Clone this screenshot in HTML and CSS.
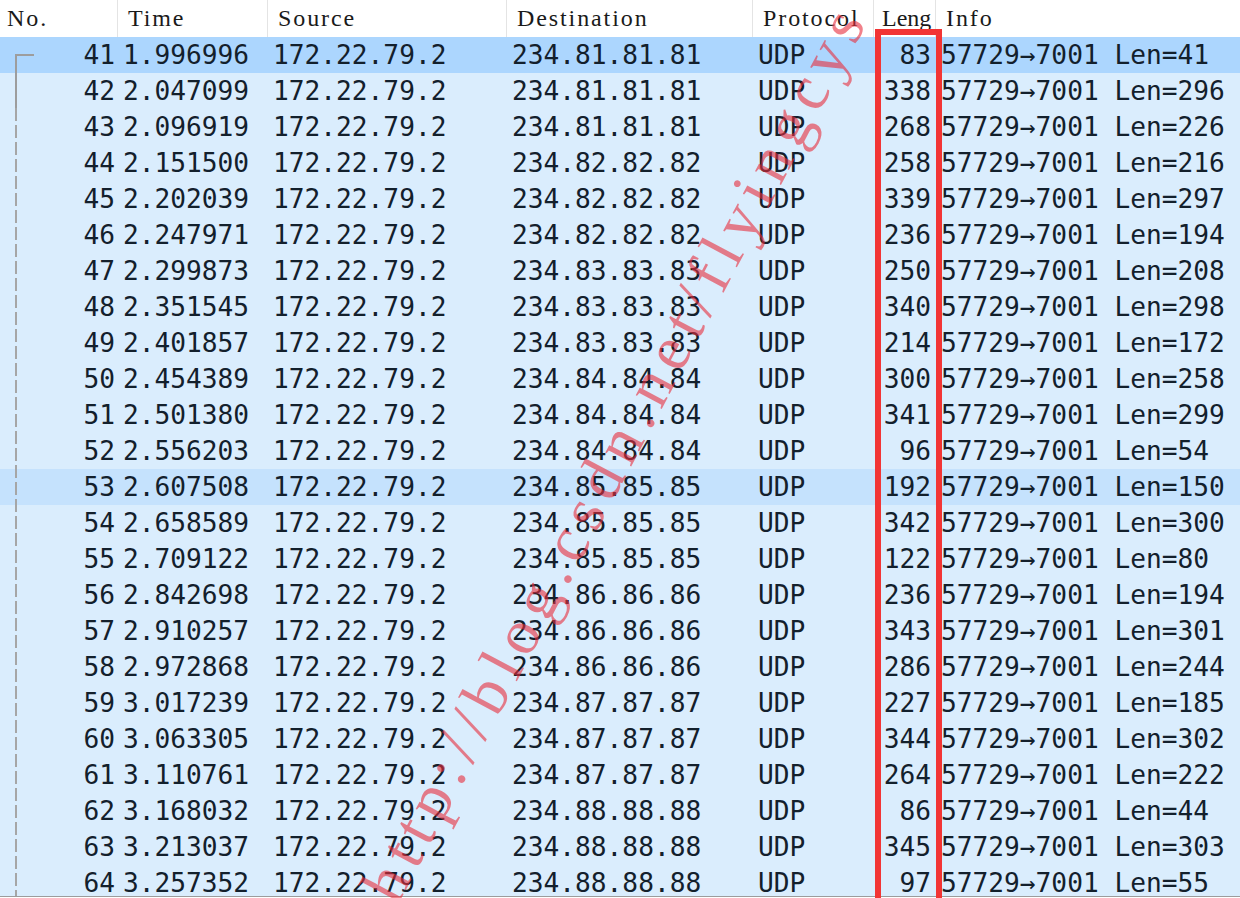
FILE: index.html
```html
<!DOCTYPE html>
<html>
<head>
  <meta charset="UTF-8" />
  <title>Packet List</title>
  <link rel="stylesheet" href="styles.css">
</head>
<body>

<div class="packet-list">
  <!-- Column headers -->
  <div class="row header">
    <div class="cell first">No.</div>
    <div class="cell">Time</div>
    <div class="cell">Source</div>
    <div class="cell">Destination</div>
    <div class="cell">Protocol</div>
    <div class="cell narrow">Leng</div>
    <div class="cell last">Info</div>
  </div>

  <div class="rows">
    <div class="row packet selected"><div class="cell num">41</div><div class="cell">1.996996</div><div class="cell">172.22.79.2</div><div class="cell">234.81.81.81</div><div class="cell">UDP</div><div class="cell num len">83</div><div class="cell">57729→7001 Len=41</div></div>
    <div class="row packet"><div class="cell num">42</div><div class="cell">2.047099</div><div class="cell">172.22.79.2</div><div class="cell">234.81.81.81</div><div class="cell">UDP</div><div class="cell num len">338</div><div class="cell">57729→7001 Len=296</div></div>
    <div class="row packet"><div class="cell num">43</div><div class="cell">2.096919</div><div class="cell">172.22.79.2</div><div class="cell">234.81.81.81</div><div class="cell">UDP</div><div class="cell num len">268</div><div class="cell">57729→7001 Len=226</div></div>
    <div class="row packet"><div class="cell num">44</div><div class="cell">2.151500</div><div class="cell">172.22.79.2</div><div class="cell">234.82.82.82</div><div class="cell">UDP</div><div class="cell num len">258</div><div class="cell">57729→7001 Len=216</div></div>
    <div class="row packet"><div class="cell num">45</div><div class="cell">2.202039</div><div class="cell">172.22.79.2</div><div class="cell">234.82.82.82</div><div class="cell">UDP</div><div class="cell num len">339</div><div class="cell">57729→7001 Len=297</div></div>
    <div class="row packet"><div class="cell num">46</div><div class="cell">2.247971</div><div class="cell">172.22.79.2</div><div class="cell">234.82.82.82</div><div class="cell">UDP</div><div class="cell num len">236</div><div class="cell">57729→7001 Len=194</div></div>
    <div class="row packet"><div class="cell num">47</div><div class="cell">2.299873</div><div class="cell">172.22.79.2</div><div class="cell">234.83.83.83</div><div class="cell">UDP</div><div class="cell num len">250</div><div class="cell">57729→7001 Len=208</div></div>
    <div class="row packet"><div class="cell num">48</div><div class="cell">2.351545</div><div class="cell">172.22.79.2</div><div class="cell">234.83.83.83</div><div class="cell">UDP</div><div class="cell num len">340</div><div class="cell">57729→7001 Len=298</div></div>
    <div class="row packet"><div class="cell num">49</div><div class="cell">2.401857</div><div class="cell">172.22.79.2</div><div class="cell">234.83.83.83</div><div class="cell">UDP</div><div class="cell num len">214</div><div class="cell">57729→7001 Len=172</div></div>
    <div class="row packet"><div class="cell num">50</div><div class="cell">2.454389</div><div class="cell">172.22.79.2</div><div class="cell">234.84.84.84</div><div class="cell">UDP</div><div class="cell num len">300</div><div class="cell">57729→7001 Len=258</div></div>
    <div class="row packet"><div class="cell num">51</div><div class="cell">2.501380</div><div class="cell">172.22.79.2</div><div class="cell">234.84.84.84</div><div class="cell">UDP</div><div class="cell num len">341</div><div class="cell">57729→7001 Len=299</div></div>
    <div class="row packet"><div class="cell num">52</div><div class="cell">2.556203</div><div class="cell">172.22.79.2</div><div class="cell">234.84.84.84</div><div class="cell">UDP</div><div class="cell num len">96</div><div class="cell">57729→7001 Len=54</div></div>
    <div class="row packet hover"><div class="cell num">53</div><div class="cell">2.607508</div><div class="cell">172.22.79.2</div><div class="cell">234.85.85.85</div><div class="cell">UDP</div><div class="cell num len">192</div><div class="cell">57729→7001 Len=150</div></div>
    <div class="row packet"><div class="cell num">54</div><div class="cell">2.658589</div><div class="cell">172.22.79.2</div><div class="cell">234.85.85.85</div><div class="cell">UDP</div><div class="cell num len">342</div><div class="cell">57729→7001 Len=300</div></div>
    <div class="row packet"><div class="cell num">55</div><div class="cell">2.709122</div><div class="cell">172.22.79.2</div><div class="cell">234.85.85.85</div><div class="cell">UDP</div><div class="cell num len">122</div><div class="cell">57729→7001 Len=80</div></div>
    <div class="row packet"><div class="cell num">56</div><div class="cell">2.842698</div><div class="cell">172.22.79.2</div><div class="cell">234.86.86.86</div><div class="cell">UDP</div><div class="cell num len">236</div><div class="cell">57729→7001 Len=194</div></div>
    <div class="row packet"><div class="cell num">57</div><div class="cell">2.910257</div><div class="cell">172.22.79.2</div><div class="cell">234.86.86.86</div><div class="cell">UDP</div><div class="cell num len">343</div><div class="cell">57729→7001 Len=301</div></div>
    <div class="row packet"><div class="cell num">58</div><div class="cell">2.972868</div><div class="cell">172.22.79.2</div><div class="cell">234.86.86.86</div><div class="cell">UDP</div><div class="cell num len">286</div><div class="cell">57729→7001 Len=244</div></div>
    <div class="row packet"><div class="cell num">59</div><div class="cell">3.017239</div><div class="cell">172.22.79.2</div><div class="cell">234.87.87.87</div><div class="cell">UDP</div><div class="cell num len">227</div><div class="cell">57729→7001 Len=185</div></div>
    <div class="row packet"><div class="cell num">60</div><div class="cell">3.063305</div><div class="cell">172.22.79.2</div><div class="cell">234.87.87.87</div><div class="cell">UDP</div><div class="cell num len">344</div><div class="cell">57729→7001 Len=302</div></div>
    <div class="row packet"><div class="cell num">61</div><div class="cell">3.110761</div><div class="cell">172.22.79.2</div><div class="cell">234.87.87.87</div><div class="cell">UDP</div><div class="cell num len">264</div><div class="cell">57729→7001 Len=222</div></div>
    <div class="row packet"><div class="cell num">62</div><div class="cell">3.168032</div><div class="cell">172.22.79.2</div><div class="cell">234.88.88.88</div><div class="cell">UDP</div><div class="cell num len">86</div><div class="cell">57729→7001 Len=44</div></div>
    <div class="row packet"><div class="cell num">63</div><div class="cell">3.213037</div><div class="cell">172.22.79.2</div><div class="cell">234.88.88.88</div><div class="cell">UDP</div><div class="cell num len">345</div><div class="cell">57729→7001 Len=303</div></div>
    <div class="row packet"><div class="cell num">64</div><div class="cell">3.257352</div><div class="cell">172.22.79.2</div><div class="cell">234.88.88.88</div><div class="cell">UDP</div><div class="cell num len">97</div><div class="cell">57729→7001 Len=55</div></div>
  </div>

  <!-- Related-packet bracket in the No. column -->
  <div class="related-start"></div>
  <div class="related-line"></div>
</div>

<!-- Highlight box around the Length column -->
<div class="highlight-box"></div>

<!-- Blog watermark -->
<div class="watermark">http://blog.csdn.net/flyingcys</div>

</body>
</html>
```

FILE: styles.css
```css
body {
  margin: 0;
  background: #ffffff;
  overflow: hidden;
}

/* Whole packet list pane */
.packet-list {
  position: relative;
  height: 896px;
  overflow: hidden;
  border-bottom: 1px solid #9c9c9c;
}

/* Shared column grid for header and packets */
.row {
  display: grid;
  grid-template-columns: 118px 150px 239px 246px 121px 62px 1fr;
}

.cell {
  white-space: nowrap;
  overflow: hidden;
}

/* Header row */
.header {
  height: 37px;
  background: #ffffff;
  font-family: "Liberation Serif", serif;
  font-size: 24px;
  letter-spacing: 1.9px;
  line-height: 37px;
  color: #1a1a1a;
}

.header .cell {
  padding-left: 10px;
  border-right: 1px solid #e4e4e4;
}

.header .first {
  padding-left: 7px;
}

.header .narrow {
  padding-left: 8px;
  letter-spacing: 0;
}

.header .last {
  border-right: none;
}

/* Packet rows */
.packet {
  height: 36px;
  background: #daedfd;
  font-family: "DejaVu Sans Mono", monospace;
  font-size: 26.2px;
  line-height: 32px;
  color: #13202c;
}

.packet .cell {
  padding: 2px 0 2px 5px;
}

.packet .num {
  text-align: right;
  padding-left: 0;
  padding-right: 3px;
}

.packet .len {
  padding-right: 5px;
}

.packet.selected {
  background: #acd6fe;
}

.packet.hover {
  background: #c5e2fd;
}

/* Related packet indicator */
.related-start {
  position: absolute;
  left: 15px;
  top: 54px;
  width: 17px;
  height: 52px;
  border-top: 2px solid #9d9d9d;
  border-left: 2px solid #9d9d9d;
}

.related-line {
  position: absolute;
  left: 15px;
  top: 108px;
  bottom: 0;
  width: 2px;
  background: repeating-linear-gradient(to bottom, #a6a6a6 0 13px, transparent 13px 17px);
}

/* Red annotation box */
.highlight-box {
  position: absolute;
  left: 875px;
  top: 29px;
  width: 67px;
  height: 900px;
  border: 6px solid #f23535;
  box-sizing: border-box;
}

.watermark {
  position: absolute;
  left: 398px;
  top: 853px;
  font-family: "Liberation Serif", serif;
  font-size: 64px;
  line-height: 64px;
  letter-spacing: 8.6px;
  white-space: nowrap;
  color: rgba(232, 45, 60, 0.6);
  transform-origin: 0 54px;
  transform: rotate(-62deg);
}
```
